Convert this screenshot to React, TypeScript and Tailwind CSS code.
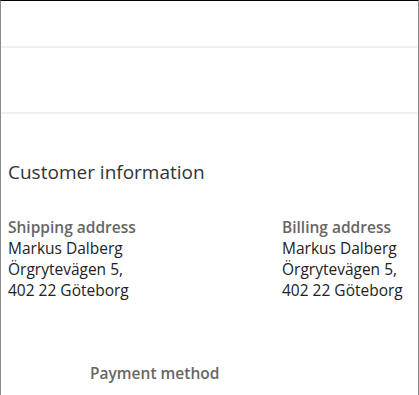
export default function App() {
  const address = ['Markus Dalberg', 'Örgrytevägen 5,', '402 22 Göteborg'];
  return (
    <div
      className="h-[395px] w-[419px] overflow-hidden border-t border-l border-r border-t-black border-x-[#8a8a8a] bg-white text-[#222]"
      style={{ fontFamily: '"Open Sans", "Noto Sans", sans-serif' }}
    >
      <div className="h-[47px] border-b-2 border-[#efefef]" />
      <div className="h-[66px] border-b-2 border-[#efefef]" />
      <div className="px-[7px] pt-[46px]">
        <h2 className="text-[19px] leading-6 text-[#333]">Customer information</h2>
        <div className="mt-[33px] flex">
          <div className="w-[274px]">
            <p className="text-[15.5px] font-semibold leading-[21px] text-[#666]">Shipping address</p>
            {address.map((line) => (
              <p key={line} className="text-[15.5px] leading-[21px]">{line}</p>
            ))}
          </div>
          <div className="whitespace-nowrap">
            <p className="text-[15.5px] font-semibold leading-[21px] text-[#666]">Billing address</p>
            {address.map((line) => (
              <p key={line} className="text-[15.5px] leading-[21px]">{line}</p>
            ))}
          </div>
        </div>
        <p className="mt-[62px] pl-[82px] text-[15.5px] font-semibold leading-[21px] text-[#666]">Payment method</p>
      </div>
    </div>
  );
}
